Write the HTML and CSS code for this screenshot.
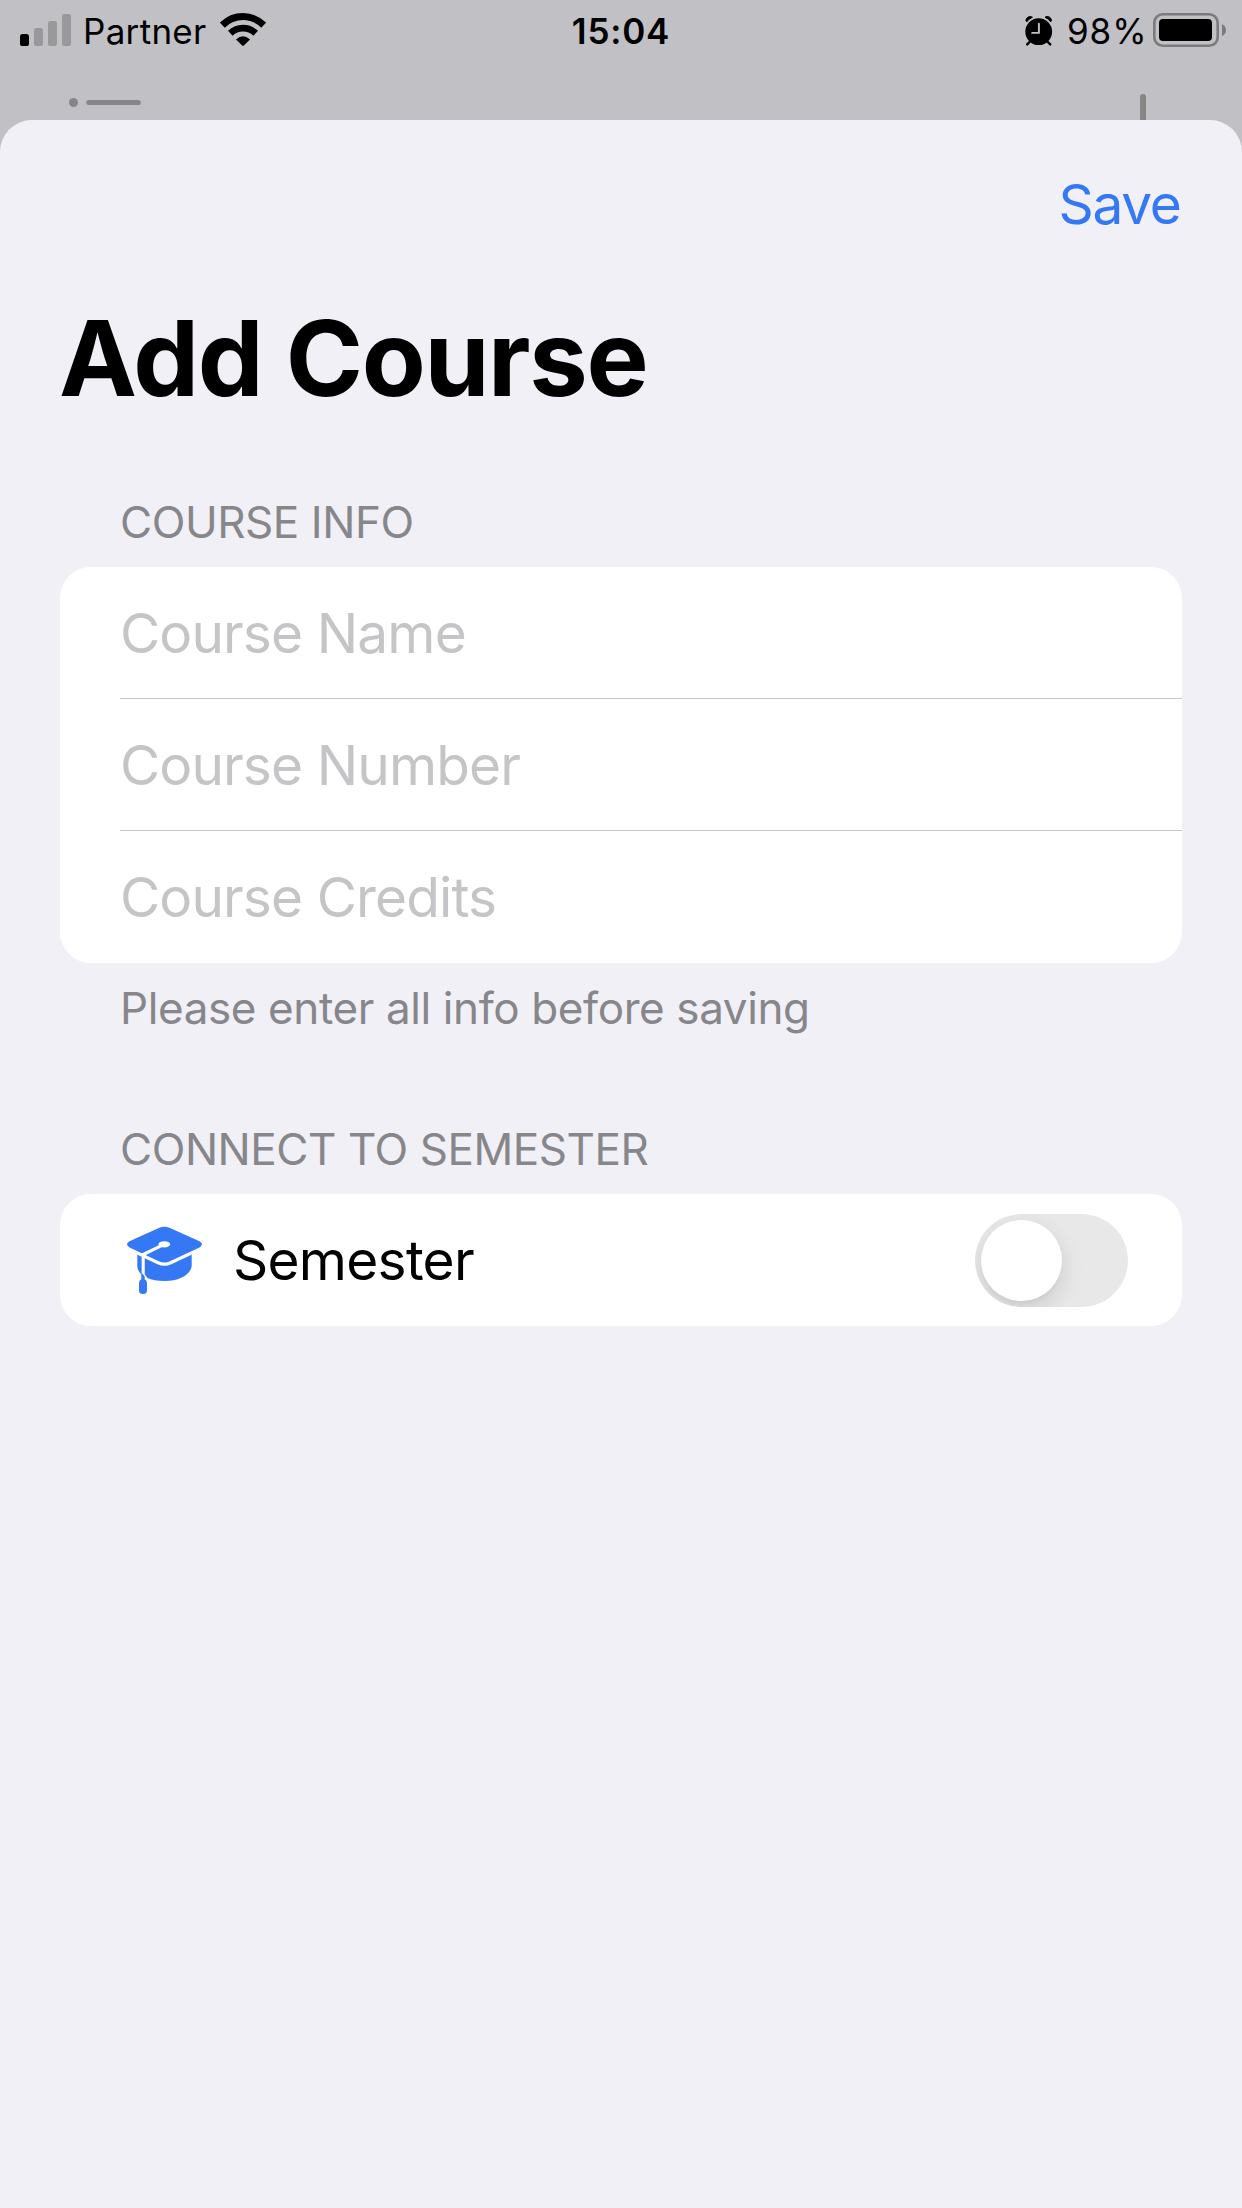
FILE: index.html
```html
<!DOCTYPE html>
<html lang="en">
<head>
<meta charset="utf-8">
<title>Add Course</title>
<link rel="stylesheet" href="styles.css">
</head>
<body>
<header class="backdrop">
  <div class="status">
    <div class="status-left">
      <svg class="signal" width="51" height="33" viewBox="0 0 51 33">
        <rect x="0" y="20" width="9" height="12" rx="2.6" fill="#000"/>
        <g fill="#99999b">
          <rect x="14" y="14" width="9" height="18" rx="2.6"/>
          <rect x="28" y="7" width="9" height="25" rx="2.6"/>
          <rect x="42" y="0" width="9" height="32" rx="2.6"/>
        </g>
      </svg>
      <span class="carrier">Partner</span>
      <svg class="wifi" width="46" height="33" viewBox="0 0 46 33">
        <g fill="none" stroke="#000">
          <path d="M2.3 12.2C14 .7 32 .7 43.7 12.2" stroke-width="7"/>
          <path d="M10.3 20.3C17.5 13.5 28.5 13.5 35.7 20.3" stroke-width="6.7"/>
        </g>
        <path d="M16 26.500Q23 20 30 26.500L23.800 32.600Q23 33.300 22.200 32.600Z"/>
      </svg>
    </div>
    <time class="clock">15:04</time>
    <div class="status-right">
      <svg class="alarm" width="28" height="30" viewBox="0 0 28 30">
        <circle cx="13.7" cy="15.7" r="13.4"/>
        <path d="M.9 4.600A4.200 4.200 0 0 1 7.400 1.200Q3.700 2.800 1.800 5.800ZM26.500 4.600A4.200 4.200 0 0 0 20 1.200Q23.700 2.800 25.600 5.800Z" stroke="#000" stroke-width="1"/>
        <path d="M5 25.500L2.200 28.400M22.400 25.500L25.200 28.400" stroke="#000" stroke-width="2.4" stroke-linecap="round"/>
        <path d="M13.900 7.800V16.900H7.200" fill="none" stroke="#c1c0c5" stroke-width="1.900" stroke-linecap="round" stroke-linejoin="round"/>
      </svg>
      <span class="percent">98%</span>
      <svg class="battery" width="73" height="34" viewBox="0 0 73 34">
        <rect x="1.3" y="1.3" width="63.4" height="31.4" rx="8.5" fill="none" stroke="#7b7b7e" stroke-width="2.6"/>
        <rect x="6" y="6" width="53" height="22" rx="4"/>
        <path d="M69 11Q73 13 73 17T69 23Z" fill="#7b7b7e"/>
      </svg>
    </div>
  </div>
  <div class="behind">
    <svg width="73" height="28" viewBox="0 0 73 28" fill="#868687">
      <circle cx="4.500" cy="8.500" r="4.500"/>
      <rect x="17.300" y="6" width="54.500" height="5" rx="2.500"/>
    </svg>
    <svg width="6" height="28" viewBox="0 0 6 28" fill="#868687">
      <rect x="0" y="0" width="6" height="40" rx="3"/>
    </svg>
  </div>
</header>
<main class="sheet">
  <div class="toolbar"><button class="save" type="button">Save</button></div>
  <h1 class="title">Add Course</h1>

  <section class="section">
    <h2 class="section-head">COURSE INFO</h2>
    <div class="card">
      <div class="field">Course Name</div>
      <div class="field">Course Number</div>
      <div class="field">Course Credits</div>
    </div>
    <p class="section-foot">Please enter all info before saving</p>
  </section>

  <section class="section section-connect">
    <h2 class="section-head">CONNECT TO SEMESTER</h2>
    <div class="card">
      <div class="row">
        <svg class="cap" width="77" height="68" viewBox="0 0 77 68">
          <path fill="#3478f6" d="M11.300 25V40C11.300 48.500 22 55 38.500 55S65.700 47.500 65.700 39V25Z"/>
          <path fill="#3478f6" stroke="#fff" stroke-width="6.600" paint-order="stroke" d="M32.800 2Q38.400 -.6 44 2L73.500 15.200Q78.500 18.300 73.500 21.400L44 35.200Q38.400 37.700 32.800 35.200L3.500 21.400Q-1.500 18.300 3.500 15.200Z"/>
          <ellipse cx="38.300" cy="18.300" rx="5.800" ry="3.100" fill="#fff"/>
          <path fill="none" stroke="#fff" stroke-width="3.100" d="M36 19.300L17.200 28.500V49L21.500 54.500"/>
          <path fill="#3478f6" d="M15.300 46.500L18.700 50.500V53.300Q21 54.300 21 57V64.500Q21 68 17 68T13 64.500V57Q13 54.300 15.300 53.300Z"/>
        </svg>
        <span class="row-label">Semester</span>
        <span class="switch" role="switch" aria-checked="false"><span class="knob"></span></span>
      </div>
    </div>
  </section>
</main>
</body>
</html>
```
FILE: styles.css
```css
* { box-sizing: border-box; }

body {
  margin: 0;
  width: 1242px;
  height: 2208px;
  overflow: hidden;
  display: flex;
  flex-direction: column;
  background: #c1c0c5;
  color: #000;
  font-family: Inter, "Liberation Sans", sans-serif;
}

svg { display: block; flex: none; }

.backdrop { height: 120px; overflow: hidden; }

.status {
  display: grid;
  grid-template-columns: 1fr auto 1fr;
  height: 63px;
  padding: 0 16px 0 20px;
  font-size: 35px;
  line-height: 63px;
}
.status-left, .status-right { display: flex; align-items: flex-start; }
.status-right { justify-content: flex-end; }
.signal { margin-top: 14px; }
.carrier { width: 137px; padding-left: 12px; letter-spacing: .3px; }
.wifi { margin: 13px 0 0 12px; }
.clock { padding-right: 4px; font-weight: 600; letter-spacing: .8px; }
.alarm { margin-top: 16px; }
.percent { padding-left: 14px; width: 100px; letter-spacing: .9px; }
.battery { margin-top: 13px; }

.behind {
  display: flex;
  justify-content: space-between;
  padding: 31px 96px 0 69px;
}

.sheet {
  flex: 1;
  padding: 51px 60px 0;
  border-radius: 32px 32px 0 0;
  background: #f1f0f6;
}

.toolbar { display: flex; justify-content: flex-end; }
.save {
  padding: 0 1.5px 0 0;
  border: 0;
  background: none;
  color: #3478f6;
  font: 400 55px/66px Inter, "Liberation Sans", sans-serif;
  letter-spacing: -1.3px;
}

.title {
  margin: 59px 0 75px -1px;
  font-size: 104.5px;
  font-weight: 700;
  line-height: 124px;
  letter-spacing: -1.35px;
}

.section-connect { margin-top: 87px; }
.section-head, .section-foot {
  margin: 0;
  padding-left: 60px;
  color: #86868b;
  font-size: 44px;
  font-weight: 400;
  line-height: 54px;
  letter-spacing: -.44px;
}
.section-head { margin-bottom: 18px; }
.section-foot { margin-top: 18px; letter-spacing: -.39px; }

.card {
  border-radius: 31px;
  background: #fff;
}
.field {
  height: 132px;
  margin-left: 60px;
  color: #c5c5c7;
  font-size: 55px;
  line-height: 132px;
  letter-spacing: -.88px;
}
.field + .field { box-shadow: 0 -1px #c6c6c8; }

.row {
  display: flex;
  align-items: center;
  height: 132px;
  padding: 0 54px 0 66px;
}
.row-label {
  flex: 1;
  margin-left: 30px;
  font-size: 55px;
  line-height: 132px;
  letter-spacing: -.75px;
}
.switch {
  display: flex;
  width: 153px;
  height: 93px;
  padding: 6px;
  border-radius: 47px;
  background: #e8e8e8;
  overflow: hidden;
}
.knob {
  width: 81px;
  height: 81px;
  border-radius: 50%;
  background: #fff;
  box-shadow: 0 9px 24px rgba(0, 0, 0, .12), 0 3px 3px rgba(0, 0, 0, .03);
}
```
